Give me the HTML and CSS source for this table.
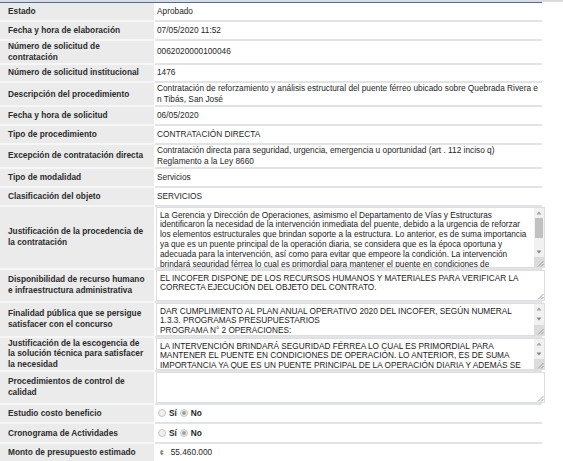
FILE: index.html
```html
<!DOCTYPE html>
<html lang="es">
<head>
<meta charset="utf-8">
<title>Solicitud de contratación</title>
<link rel="stylesheet" href="styles.css">
</head>
<body>
<div class="topbar"></div>
<div class="sheet">
  <div class="row"><div class="lbl">Estado</div><div class="val">Aprobado</div></div>
  <div class="row"><div class="lbl">Fecha y hora de elaboración</div><div class="val">07/05/2020 11:52</div></div>
  <div class="row"><div class="lbl">Número de solicitud de<br>contratación</div><div class="val">0062020000100046</div></div>
  <div class="row"><div class="lbl">Número de solicitud institucional</div><div class="val">1476</div></div>
  <div class="row"><div class="lbl">Descripción del procedimiento</div><div class="val">Contratación de reforzamiento y análisis estructural del puente férreo ubicado sobre Quebrada Rivera e<br>n Tibás, San José</div></div>
  <div class="row"><div class="lbl">Fecha y hora de solicitud</div><div class="val">06/05/2020</div></div>
  <div class="row"><div class="lbl">Tipo de procedimiento</div><div class="val">CONTRATACIÓN DIRECTA</div></div>
  <div class="row"><div class="lbl">Excepción de contratación directa</div><div class="val">Contratación directa para seguridad, urgencia, emergencia u oportunidad (art . 112 inciso q)<br>Reglamento a la Ley 8660</div></div>
  <div class="row"><div class="lbl">Tipo de modalidad</div><div class="val">Servicios</div></div>
  <div class="row"><div class="lbl">Clasificación del objeto</div><div class="val">SERVICIOS</div></div>

  <div class="row"><div class="lbl">Justificación de la procedencia de<br>la contratación</div>
    <div class="val area-cell">
      <div class="area h-61">
        <div class="area-text">La Gerencia y Dirección de Operaciones, asimismo el Departamento de Vías y Estructuras<br>identificaron la necesidad de la intervención inmediata del puente, debido a la urgencia de reforzar<br>los elementos estructurales que brindan soporte a la estructura. Lo anterior, es de suma importancia<br>ya que es un puente principal de la operación diaria, se considera que es la época oportuna y<br>adecuada para la intervención, así como para evitar que empeore la condición. La intervención<br>brindará seguridad férrea lo cual es primordial para mantener el puente en condiciones de<br>operación.</div>
        <div class="sbar">
          <div class="sbtn"><svg width="6" height="4" viewBox="0 0 6 4"><path d="M3 0.5 L5.5 3.5 L0.5 3.5Z" fill="#a3a3a3"/></svg></div>
          <div class="strack"><div class="sthumb"></div></div>
          <div class="sbtn"><svg width="6" height="4" viewBox="0 0 6 4"><path d="M0.5 0.5 L5.5 0.5 L3 3.5Z" fill="#8a8a8a"/></svg></div>
          <div class="corner gray"><svg width="8" height="8" viewBox="0 0 8 8"><path d="M7.5 2 L2 7.5 M7.5 5 L5 7.5" stroke="#8a8a8a" stroke-width="0.8"/></svg></div>
        </div>
      </div>
    </div>
  </div>

  <div class="row"><div class="lbl">Disponibilidad de recurso humano<br>e infraestructura administrativa</div>
    <div class="val area-cell">
      <div class="area h-31">
        <div class="area-text">EL INCOFER DISPONE DE LOS RECURSOS HUMANOS Y MATERIALES PARA VERIFICAR LA<br>CORRECTA EJECUCIÓN DEL OBJETO DEL CONTRATO.</div>
        <div class="sbar plain">
          <div class="strack"></div>
          <div class="corner"><svg width="8" height="8" viewBox="0 0 8 8"><path d="M7.5 2 L2 7.5 M7.5 5 L5 7.5" stroke="#8a8a8a" stroke-width="0.8"/></svg></div>
        </div>
      </div>
    </div>
  </div>

  <div class="row"><div class="lbl">Finalidad pública que se persigue<br>satisfacer con el concurso</div>
    <div class="val area-cell">
      <div class="area h-33">
        <div class="area-text">DAR CUMPLIMIENTO AL PLAN ANUAL OPERATIVO 2020 DEL INCOFER, SEGÚN NUMERAL<br>1.3.3. PROGRAMAS PRESUPUESTARIOS<br>PROGRAMA N° 2 OPERACIONES:<br>PROYECTO: MANTENIMIENTO DE LA INFRAESTRUCTURA FERROVIARIA</div>
        <div class="sbar">
          <div class="sbtn"><svg width="6" height="4" viewBox="0 0 6 4"><path d="M3 0.5 L5.5 3.5 L0.5 3.5Z" fill="#a3a3a3"/></svg></div>
          <div class="sbtn"><svg width="6" height="4" viewBox="0 0 6 4"><path d="M0.5 0.5 L5.5 0.5 L3 3.5Z" fill="#8a8a8a"/></svg></div>
          <div class="strack"></div>
          <div class="corner gray"><svg width="8" height="8" viewBox="0 0 8 8"><path d="M7.5 2 L2 7.5 M7.5 5 L5 7.5" stroke="#8a8a8a" stroke-width="0.8"/></svg></div>
        </div>
      </div>
    </div>
  </div>

  <div class="row"><div class="lbl tight">Justificación de la escogencia de<br>la solución técnica para satisfacer<br>la necesidad</div>
    <div class="val area-cell">
      <div class="area h-32">
        <div class="area-text">LA INTERVENCIÓN BRINDARÁ SEGURIDAD FÉRREA LO CUAL ES PRIMORDIAL PARA<br>MANTENER EL PUENTE EN CONDICIONES DE OPERACIÓN. LO ANTERIOR, ES DE SUMA<br>IMPORTANCIA YA QUE ES UN PUENTE PRINCIPAL DE LA OPERACIÓN DIARIA Y ADEMÁS SE<br>CONSIDERA QUE ES LA ÉPOCA OPORTUNA Y ADECUADA PARA LA INTERVENCIÓN.</div>
        <div class="sbar">
          <div class="sbtn"><svg width="6" height="4" viewBox="0 0 6 4"><path d="M3 0.5 L5.5 3.5 L0.5 3.5Z" fill="#a3a3a3"/></svg></div>
          <div class="sbtn"><svg width="6" height="4" viewBox="0 0 6 4"><path d="M0.5 0.5 L5.5 0.5 L3 3.5Z" fill="#8a8a8a"/></svg></div>
          <div class="strack"></div>
          <div class="corner gray"><svg width="8" height="8" viewBox="0 0 8 8"><path d="M7.5 2 L2 7.5 M7.5 5 L5 7.5" stroke="#8a8a8a" stroke-width="0.8"/></svg></div>
        </div>
      </div>
    </div>
  </div>

  <div class="row"><div class="lbl">Procedimientos de control de<br>calidad</div>
    <div class="val area-cell">
      <div class="area h-31">
        <div class="area-text"></div>
        <div class="sbar plain">
          <div class="strack"></div>
          <div class="corner"><svg width="8" height="8" viewBox="0 0 8 8"><path d="M7.5 2 L2 7.5 M7.5 5 L5 7.5" stroke="#8a8a8a" stroke-width="0.8"/></svg></div>
        </div>
      </div>
    </div>
  </div>

  <div class="row tall"><div class="lbl">Estudio costo beneficio</div>
    <div class="val radios">
      <span class="radio"></span><span class="rtext">Sí</span>
      <span class="radio on"></span><span class="rtext">No</span>
    </div>
  </div>
  <div class="row tall"><div class="lbl">Cronograma de Actividades</div>
    <div class="val radios">
      <span class="radio"></span><span class="rtext">Sí</span>
      <span class="radio on"></span><span class="rtext">No</span>
    </div>
  </div>
  <div class="row tall"><div class="lbl">Monto de presupuesto estimado</div>
    <div class="val money"><span class="cur">¢</span><span>55.460.000</span></div>
  </div>
</div>
</body>
</html>
```

FILE: styles.css
```css
html, body {
  margin: 0;
  padding: 0;
  background: #ffffff;
}
body {
  font-family: "Liberation Sans", Arial, sans-serif;
  font-size: 8.3px;
  color: #262626;
  overflow: hidden;
}
.topbar {
  height: 2px;
  background: #dcdcdc;
}
.sheet {
  width: 542px;
  border-top: 1.5px solid #4a6fa3;
}
.row {
  display: grid;
  grid-template-columns: 154px 1fr;
  column-gap: 1px;
}
.lbl {
  background: #ebebeb;
  border-bottom: 2px solid #f6f6f6;
  padding: 0 8px;
  min-height: 16.8px;
  display: flex;
  align-items: center;
  font-weight: bold;
  line-height: 11px;
  color: #2b2b2b;
}
.lbl.tight {
  line-height: 10.7px;
}
.val {
  border-bottom: 2px solid #e2e3e7;
  padding: 0 2px;
  min-height: 16.8px;
  display: flex;
  align-items: center;
  line-height: 11px;
  white-space: nowrap;
  min-width: 0;
}
.row.tall .lbl,
.row.tall .val {
  min-height: 17.6px;
}
.area-cell {
  padding: 0 0 0 1px;
  align-items: stretch;
}
.area {
  width: 389px;
  flex: none;
  border: 1px solid #dedede;
  box-sizing: border-box;
  display: flex;
  background: #fff;
}
.h-61 { height: 61px; }
.h-31 { height: 31px; }
.h-33 { height: 33px; }
.h-32 { height: 32px; }
.area-text {
  flex: 1;
  overflow: hidden;
  padding: 3px 3px 0 3px;
  font-size: 8.25px;
  line-height: 9.8px;
  color: #222;
  white-space: nowrap;
}
.sbar {
  width: 10px;
  flex: none;
  display: flex;
  flex-direction: column;
  background: #f1f1f1;
}
.sbar.plain {
  background: transparent;
}
.sbtn {
  height: 10px;
  display: flex;
  align-items: center;
  justify-content: center;
}
.strack {
  flex: 1;
  display: flex;
  flex-direction: column;
  padding: 0 1px;
}
.sthumb {
  height: 20px;
  background: #c1c1c1;
}
.corner {
  height: 10px;
  display: flex;
  align-items: flex-end;
  justify-content: flex-end;
}
.corner.gray {
  background: #dcdcdc;
}
.radios {
  padding-left: 3px;
}
.radio {
  width: 8px;
  height: 8px;
  border: 1px solid #c4c4c4;
  border-radius: 50%;
  background: #f0f0f0;
  box-sizing: border-box;
  display: inline-flex;
  align-items: center;
  justify-content: center;
  margin-right: 3px;
}
.radio.on::after {
  content: "";
  width: 4px;
  height: 4px;
  border-radius: 50%;
  background: #a0a0a0;
}
.rtext {
  font-weight: bold;
  margin-right: 3px;
}
.money {
  padding-left: 5px;
}
.cur {
  font-size: 6.5px;
  margin-right: 7px;
}
```
